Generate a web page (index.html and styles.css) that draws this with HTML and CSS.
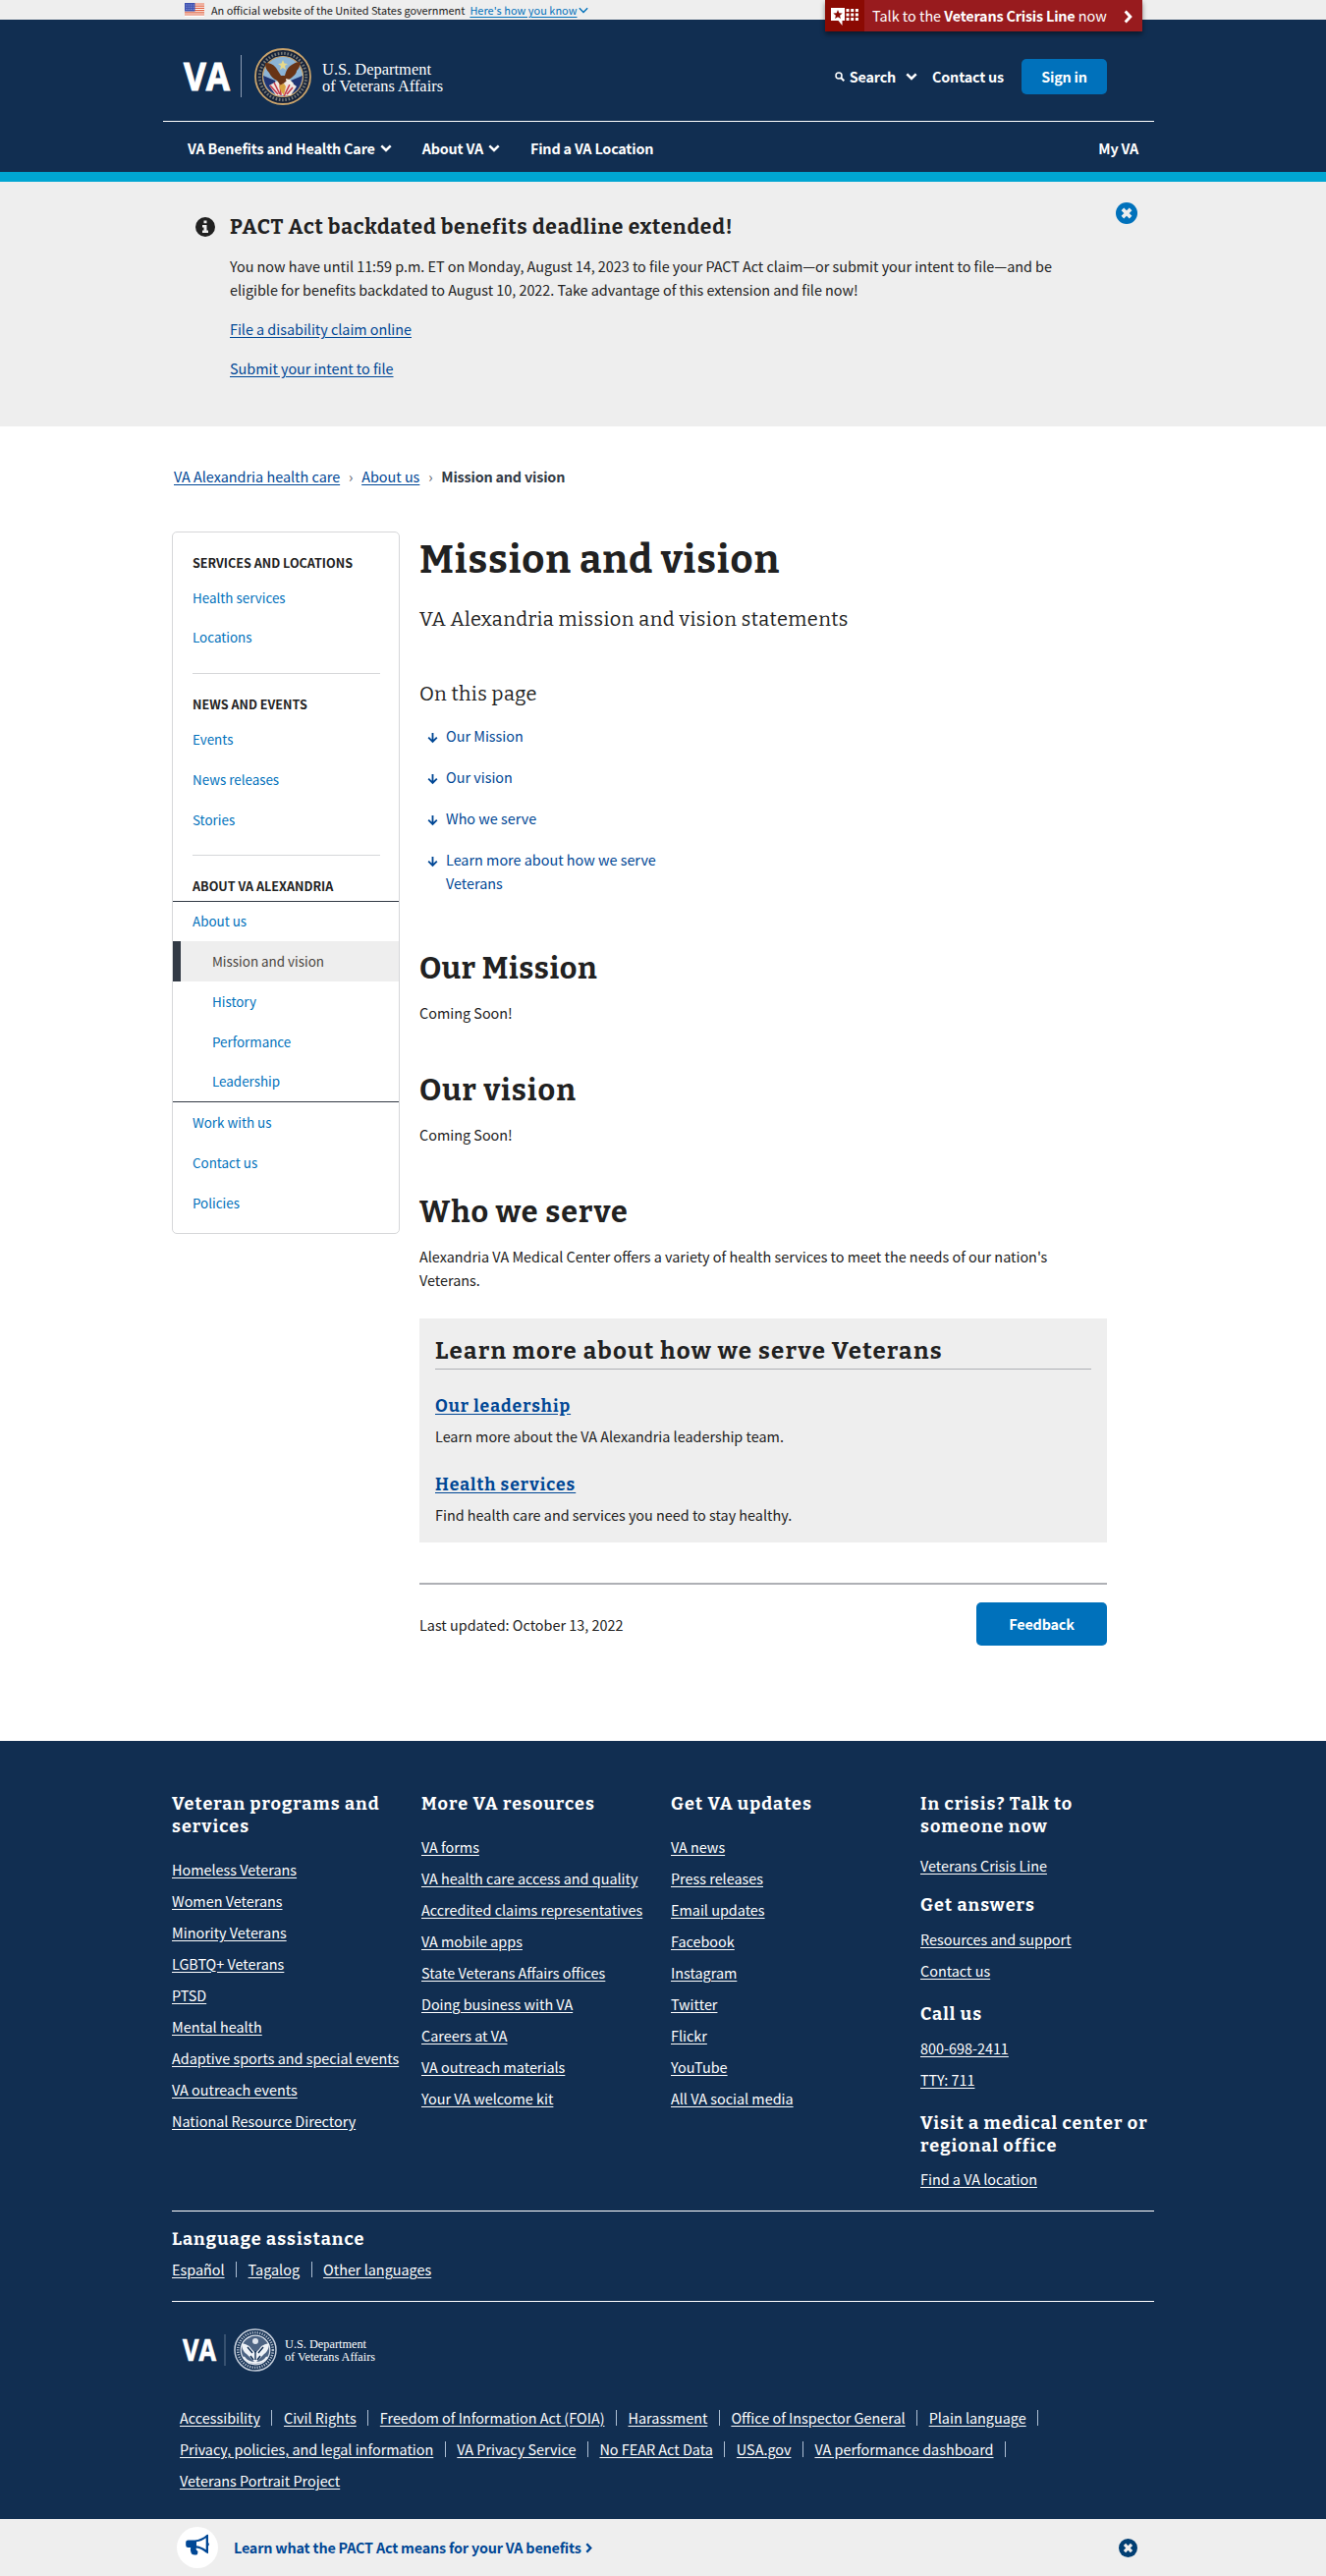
FILE: index.html
```html
<!DOCTYPE html>
<html lang="en">
<head>
<meta charset="utf-8">
<title>Mission and vision | VA Alexandria health care</title>
<link rel="stylesheet" href="styles.css">
</head>
<body>
<svg class="defs" aria-hidden="true">
  <symbol id="chevron-down" viewBox="0 0 12 8"><path d="M1.3 1.3 6 6l4.700-4.700" fill="none" stroke="currentColor" stroke-width="2.500"/></symbol>
  <symbol id="chevron-thin" viewBox="0 0 12 8"><path d="M1 1.300 6 6.300l5-5" fill="none" stroke="currentColor" stroke-width="1.700"/></symbol>
  <symbol id="chevron-right" viewBox="0 0 10 16"><path d="M1.800 1.800 7.600 8l-5.800 6.200" fill="none" stroke="currentColor" stroke-width="3.400"/></symbol>
  <symbol id="close" viewBox="0 0 22 22"><circle cx="11" cy="11" r="11" fill="currentColor"/><path d="m6.900 6.900 8.200 8.200m0-8.200-8.200 8.200" stroke="#eee" stroke-width="3.700"/></symbol>
  <symbol id="arrow-down" viewBox="0 0 12 12"><path d="M6 .5v10M1.300 5.600 6 10.300l4.700-4.700" fill="none" stroke="currentColor" stroke-width="2"/></symbol>
</svg>

<div class="gov-banner">
  <div class="gov-inner">
    <svg class="flag" viewBox="0 0 20 14"><path fill="#fff" d="M0 0h20v14H0z"/><path d="M0 1h20M0 3.200h20M0 5.400h20M0 7.600h20M0 9.800h20M0 12h20" stroke="#e0603f" stroke-width="1.200"/><path fill="#3c50b0" d="M0 0h10.500v8.500H0z"/><path d="M1.500 2h8M1.500 4.200h8M1.500 6.400h8" stroke="#aab4e6" stroke-dasharray="1 1.300"/></svg>
    <span class="gov-text">An official website of the United States government</span>
    <a class="gov-link">Here's how you know</a><svg class="gov-chev"><use href="#chevron-thin"/></svg>
  </div>
  <a class="crisis">
    <span class="crisis-icon"><svg viewBox="0 0 28 18"><path fill="#fff" d="M0 0h14v13h-2.500v5l-4-5H0z"/><path fill="#8b0a03" d="m7 2 1.300 3.200 3.400.3-2.600 2.200.8 3.300L7 9.200 4.100 11l.8-3.300-2.600-2.200 3.400-.3z"/><path d="M15.500 2.500H28M15.500 7H28M15.500 11.500H28" stroke="#fff" stroke-width="3" stroke-dasharray="3 1.700"/></svg></span>
    <span class="crisis-text">Talk to the <b>Veterans Crisis Line</b> now</span>
    <svg class="crisis-chev"><use href="#chevron-right"/></svg>
  </a>
</div>

<header class="header">
  <div class="header-top">
    <svg class="logo" viewBox="0 0 268 62">
      <text class="logo-va" x="0" y="45" font-size="40" textLength="47" lengthAdjust="spacingAndGlyphs">VA</text>
      <path d="M58.500 9v43" stroke="#8b9cb3"/>
      <g transform="translate(101 31)">
        <circle r="28" fill="#15223a" stroke="#c9a36b" stroke-width="1.800"/>
        <circle r="23.700" fill="none" stroke="#b8b4a0" stroke-width="3" stroke-dasharray="1.600 1.700" opacity=".6"/>
        <circle r="20.500" fill="#8cb4d6" stroke="#c9a36b" stroke-width="1.200"/>
        <path fill="#1f3472" d="M-20-1-8 4l4 15c-9-2-15-9-16-20zM20-1 8 4l-3 15c9-2 14-9 15-20z"/>
        <path fill="#f0e6e0" d="M-14 9-5 4h11l8 6-6 9H-7z"/>
        <path d="m-13 9 8 9m-4-12 6 12m0-13 1 14m9-11-6 12m9-9-6 7" stroke="#c23a4c" stroke-width="1.600"/>
        <path fill="#683416" d="M-18-14c4 0 8 1 11 5l5 8 4 0c1-4 3-9 7-11 3-2 5-3 9-3-1 4-1 6-4 9 0 3-3 5-5 7L3 5-2 9-6 4c-4-2-6-4-8-8-3-3-4-6-4-10z"/>
        <path fill="#f3efe6" d="m3 2 4 1 4 4-2 2-5-2z"/>
        <path fill="#d9a441" d="m-4 9 5-2 2 3-2 9-3-4z"/>
        <path fill="#e8d98a" d="m0-17 1.500 3.500L5-13l-3 2 1 4-3-2-3 2 1-4-3-2 3.500-.5z"/>
      </g>
      <text class="logo-dept" x="141" y="28.500" font-size="17.500" textLength="111" lengthAdjust="spacingAndGlyphs">U.S. Department</text>
      <text class="logo-dept" x="141" y="45.500" font-size="17.500" textLength="123" lengthAdjust="spacingAndGlyphs">of Veterans Affairs</text>
    </svg>
    <div class="tools">
      <a class="search"><svg class="glass" viewBox="0 0 10 10"><circle cx="4" cy="4" r="3" fill="none" stroke="currentColor" stroke-width="1.500"/><path d="m6 6 3.300 3.300" stroke="currentColor" stroke-width="2"/></svg>Search<svg class="chev"><use href="#chevron-down"/></svg></a>
      <a class="contact">Contact us</a>
      <a class="sign-in">Sign in</a>
    </div>
  </div>
  <nav class="nav">
    <a>VA Benefits and Health Care<svg class="chev"><use href="#chevron-down"/></svg></a>
    <a class="nav-about">About VA<svg class="chev"><use href="#chevron-down"/></svg></a>
    <a class="nav-find">Find a VA Location</a>
    <a class="nav-my">My VA</a>
  </nav>
</header>

<section class="notice">
  <div class="notice-inner">
    <svg class="info" viewBox="0 0 20 20"><circle cx="10" cy="10" r="10" fill="#212121"/><path fill="#eee" d="M8.500 3.500h3v2.800h-3zM7 8h4.500v5.500H13V16H7v-2.500h1.500v-3H7z"/></svg>
    <div class="notice-body">
      <h2>PACT Act backdated benefits deadline extended!</h2>
      <p>You now have until 11:59 p.m. ET on Monday, August 14, 2023 to file your PACT Act claim—or submit your intent to file—and be<br>eligible for benefits backdated to August 10, 2022. Take advantage of this extension and file now!</p>
      <p><a>File a disability claim online</a></p>
      <p><a>Submit your intent to file</a></p>
    </div>
    <svg class="close"><use href="#close"/></svg>
  </div>
</section>

<nav class="crumbs"><a>VA Alexandria health care</a><i>›</i><a>About us</a><i>›</i><b>Mission and vision</b></nav>

<div class="content">
  <aside class="side">
    <h3>Services and locations</h3>
    <a>Health services</a>
    <a>Locations</a>
    <hr>
    <h3>News and events</h3>
    <a>Events</a>
    <a>News releases</a>
    <a>Stories</a>
    <hr>
    <h3>About VA Alexandria</h3>
    <div class="side-open">
      <a>About us</a>
      <a class="sub active">Mission and vision</a>
      <a class="sub">History</a>
      <a class="sub">Performance</a>
      <a class="sub">Leadership</a>
    </div>
    <a>Work with us</a>
    <a>Contact us</a>
    <a>Policies</a>
  </aside>

  <main class="main">
    <h1>Mission and vision</h1>
    <p class="intro">VA Alexandria mission and vision statements</p>
    <h2 class="toc-title">On this page</h2>
    <ul class="toc">
      <li><svg><use href="#arrow-down"/></svg><a>Our Mission</a></li>
      <li><svg><use href="#arrow-down"/></svg><a>Our vision</a></li>
      <li><svg><use href="#arrow-down"/></svg><a>Who we serve</a></li>
      <li><svg><use href="#arrow-down"/></svg><a>Learn more about how we serve Veterans</a></li>
    </ul>
    <h2>Our Mission</h2>
    <p>Coming Soon!</p>
    <h2 class="wide">Our vision</h2>
    <p>Coming Soon!</p>
    <h2 class="wide">Who we serve</h2>
    <p>Alexandria VA Medical Center offers a variety of health services to meet the needs of our nation's<br>Veterans.</p>
    <section class="more">
      <h3>Learn more about how we serve Veterans</h3>
      <h4><a>Our leadership</a></h4>
      <p>Learn more about the VA Alexandria leadership team.</p>
      <h4><a>Health services</a></h4>
      <p>Find health care and services you need to stay healthy.</p>
    </section>
    <div class="updated">
      <span>Last updated: October 13, 2022</span>
      <a class="feedback">Feedback</a>
    </div>
  </main>
</div>

<footer class="footer">
  <div class="footer-inner">
    <div class="cols">
      <div>
        <h4>Veteran programs and services</h4>
        <ul><li><a>Homeless Veterans</a></li><li><a>Women Veterans</a></li><li><a>Minority Veterans</a></li><li><a>LGBTQ+ Veterans</a></li><li><a>PTSD</a></li><li><a>Mental health</a></li><li><a>Adaptive sports and special events</a></li><li><a>VA outreach events</a></li><li><a>National Resource Directory</a></li></ul>
      </div>
      <div>
        <h4>More VA resources</h4>
        <ul><li><a>VA forms</a></li><li><a>VA health care access and quality</a></li><li><a>Accredited claims representatives</a></li><li><a>VA mobile apps</a></li><li><a>State Veterans Affairs offices</a></li><li><a>Doing business with VA</a></li><li><a>Careers at VA</a></li><li><a>VA outreach materials</a></li><li><a>Your VA welcome kit</a></li></ul>
      </div>
      <div>
        <h4>Get VA updates</h4>
        <ul><li><a>VA news</a></li><li><a>Press releases</a></li><li><a>Email updates</a></li><li><a>Facebook</a></li><li><a>Instagram</a></li><li><a>Twitter</a></li><li><a>Flickr</a></li><li><a>YouTube</a></li><li><a>All VA social media</a></li></ul>
      </div>
      <div class="help">
        <h4>In crisis? Talk to someone now</h4>
        <ul class="first"><li><a>Veterans Crisis Line</a></li></ul>
        <h4>Get answers</h4>
        <ul><li><a>Resources and support</a></li><li><a>Contact us</a></li></ul>
        <h4>Call us</h4>
        <ul><li><a>800-698-2411</a></li><li><a>TTY: 711</a></li></ul>
        <h4>Visit a medical center or regional office</h4>
        <ul class="last"><li><a>Find a VA location</a></li></ul>
      </div>
    </div>
    <div class="lang">
      <h4>Language assistance</h4>
      <ul class="bars"><li><a>Español</a></li><li><a>Tagalog</a></li><li><a>Other languages</a></li></ul>
    </div>
    <svg class="footer-logo" viewBox="0 0 200 46">
      <text class="logo-va small" x="0" y="34" font-size="30.500" textLength="34" lengthAdjust="spacingAndGlyphs">VA</text>
      <path d="M43 7v32" stroke="#5f7490"/>
      <g transform="translate(74 23)">
        <circle r="21" fill="#112e51" stroke="#c5cedb" stroke-width="1.500"/>
        <circle r="17.800" fill="none" stroke="#c5cedb" stroke-width="2.600" stroke-dasharray="1.300 1.200" opacity=".85"/>
        <circle r="14.800" fill="#4d6483" stroke="#dfe5ee" stroke-width="1.300"/>
        <path fill="#eef2f7" d="M-14-7c4 1 8 2 10 6l4 4 4-4c2-4 6-5 10-6 0 5-2 9-5 11L5 8l-5 5-5-5-4-4c-3-2-5-6-5-11z"/>
        <circle cy="-9" r="3" fill="#dfe5ee"/>
        <path d="m-8-3 5 6m11-6-5 6M0 1v9m-5-4 3 4m7-4-3 4" stroke="#112e51" stroke-width="1.400"/>
        <path d="M-12 7c5 8 19 8 24 0" fill="none" stroke="#eef2f7" stroke-width="2"/>
      </g>
      <text class="logo-dept" x="104" y="21" font-size="12.500" textLength="83" lengthAdjust="spacingAndGlyphs">U.S. Department</text>
      <text class="logo-dept" x="104" y="33.500" font-size="12.500" textLength="92" lengthAdjust="spacingAndGlyphs">of Veterans Affairs</text>
    </svg>
    <ul class="bars legal"><li><a>Accessibility</a></li><li><a>Civil Rights</a></li><li><a>Freedom of Information Act (FOIA)</a></li><li><a>Harassment</a></li><li><a>Office of Inspector General</a></li><li><a>Plain language</a></li><li><a>Privacy, policies, and legal information</a></li><li><a>VA Privacy Service</a></li><li><a>No FEAR Act Data</a></li><li><a>USA.gov</a></li><li><a>VA performance dashboard</a></li><li><a>Veterans Portrait Project</a></li></ul>
  </div>
</footer>

<div class="promo">
  <div class="promo-inner">
    <span class="promo-icon"><svg viewBox="0 0 24 22"><path fill="currentColor" fill-rule="evenodd" d="M23 .8v8.100a2.300 2.300 0 0 1 0 3.600v7.700l-2.300-1c-3-2.600-6.200-4.200-9.800-4.700-.8 1 .2 2.400 1.600 3.600l-.5 2.800c-1.800 1-4.500.8-5.900-.4-.8-2.300-1.700-4-.9-6.500H2.500A2.300 2.300 0 0 1 .2 11.700V8.600a2.300 2.300 0 0 1 2.300-2.200h6.800C13.800 6.200 18 4.200 21.500 1zM20.700 4.300c-3 2.200-6.200 3.600-9.700 4v3.900c3.500.5 6.700 1.800 9.700 4.100z"/></svg></span>
    <a class="promo-link">Learn what the PACT Act means for your VA benefits<svg><use href="#chevron-right"/></svg></a>
    <svg class="promo-close"><use href="#close"/></svg>
  </div>
</div>
</body>
</html>
```
FILE: styles.css
```css
* { box-sizing: border-box; }
body {
  margin: 0;
  background: #fff;
  color: #212121;
  font: 14.4px/24px "Noto Sans CJK SC", "Open Sans", sans-serif;
}
h1, h2, h3, h4, p, ul { margin: 0; padding: 0; }
h1, h2, h3, h4, .intro { font-family: Bitter, "DejaVu Serif Condensed", serif; }
ul { list-style: none; }
a { color: #004795; text-decoration: none; }
b, .tools, .nav, .feedback, .promo-link { font-weight: 700; letter-spacing: -.2px; }
svg { display: block; }
.defs { position: absolute; width: 0; height: 0; }

/* government banner */
.gov-banner { position: relative; height: 20px; background: #eee; }
.gov-inner {
  display: flex; align-items: center;
  height: 20px; padding-left: 188px;
  font-size: 10.9px; line-height: 20px;
}
.flag { width: 20px; height: 14px; margin-right: 7px; }
.gov-link {
  margin-left: 5px; color: #0071bb; letter-spacing: .06px;
  text-decoration: underline; text-underline-offset: 2px;
}
.gov-chev { width: 10px; height: 7px; margin-left: 1px; color: #0071bb; }
.crisis {
  position: absolute; left: 840px; top: 0; z-index: 2;
  display: flex; align-items: center;
  width: 323px; height: 32px;
  background: #981b1e; color: #fff;
  box-shadow: 0 3px 5px rgba(0, 0, 0, .45);
}
.crisis-icon {
  display: flex; align-items: center;
  width: 40px; height: 32px; padding-left: 6px;
  background: #8b0a03;
}
.crisis-icon svg { width: 28px; height: 18px; margin-top: 2px; }
.crisis-text { margin-left: 8px; white-space: nowrap; }
.crisis-chev { width: 9px; height: 14px; margin: 1px 10px 0 auto; }

/* header */
.header { height: 165px; background: #112e51; border-bottom: 10px solid #00a6d2; }
.header a { color: #fff; }
.header-top {
  display: flex; align-items: center; justify-content: space-between;
  width: 1009px; height: 104px; margin-left: 166px;
  padding: 12px 48px 0 20.500px;
  border-bottom: 1px solid #fff;
}
.logo { width: 268px; height: 62px; overflow: visible; }
.logo-va { font-family: "Open Sans", sans-serif; font-weight: 700; fill: #fff; stroke: #fff; stroke-width: 1px; letter-spacing: 0; }
.logo-va.small { stroke-width: .7px; }
.logo-dept { font-family: "Liberation Serif", serif; font-weight: 400; fill: #fff; letter-spacing: 0; }
.tools, .search { display: flex; align-items: center; }
.glass { width: 10px; height: 10px; margin-right: 5px; }
.chev { width: 12px; height: 8px; }
.search .chev { margin-left: 10px; }
.contact { margin-left: 15px; }
.sign-in {
  width: 87px; height: 36px; margin-left: 18px;
  border-radius: 5px; background: #0071bb;
  line-height: 36px; text-align: center;
}
.nav {
  display: flex; align-items: center;
  height: 51px; padding: 3px 191px 0;
}
.nav a { display: flex; align-items: center; white-space: nowrap; }
.nav .chev { margin-left: 5px; }
.nav-about { margin-left: 31px; }
.nav-find { margin-left: 31px; }
.nav-my { margin-left: auto; }

/* notice */
.notice { height: 249px; background: #eee; }
.notice-inner { display: flex; padding: 33px 192px 0 199px; }
.info { width: 20px; height: 20px; margin: 3px 15px 0 0; }
.notice-body { flex: 1; white-space: nowrap; }
.notice-body h2 { margin-bottom: 15px; font-size: 21px; line-height: 26px; letter-spacing: .79px; }
.notice-body p { margin-bottom: 16px; letter-spacing: -.02px; }
.notice-body a, .crumbs a, .more a, .footer a { text-decoration: underline; text-underline-offset: 2px; }
.close { width: 22px; height: 22px; margin-top: -12px; color: #0071bb; }

/* breadcrumb */
.crumbs { display: flex; height: 107px; padding: 39px 0 0 177px; }
.crumbs i { width: 22px; color: #5b616b; font-style: normal; text-align: center; }
.crumbs b { color: #323a45; }

/* columns */
.content { display: flex; height: 1231px; padding-left: 175px; }

/* side navigation */
.side {
  width: 232px; height: 715px; margin-right: 20px;
  padding-top: 18.500px;
  border: 1px solid #d6d7d9; border-radius: 5px;
}
.side h3 {
  padding: 0 0 0 20px; margin-bottom: 3px;
  font: 700 12.600px/24px "Noto Sans CJK SC", sans-serif;
  text-transform: uppercase;
}
.side a { display: block; padding-left: 20px; color: #0071bb; font-size: 13.400px; line-height: 40.750px; }
.side hr { height: 0; margin: 15.500px 19px 19.500px 20px; border: 0; border-top: 1px solid #d6d7d9; }
.side-open { border: solid #323a45; border-width: 1px 0; }
.side-open a:first-child { margin-top: -1px; }
.side .sub { padding-left: 40px; }
.side .active { padding-left: 32px; border-left: 8px solid #323a45; background: #eee; color: #494440; }

/* article */
.main { width: 700px; }
h1 { font-size: 40px; line-height: 52px; letter-spacing: .89px; padding-top: 3px; }
.intro { margin-top: 18px; font-size: 20px; line-height: 32px; letter-spacing: .44px; }
.toc { width: 250px; padding-left: 8px; margin-bottom: 55px; }
.toc li { display: flex; margin-bottom: 18px; }
.toc li:last-child { margin-bottom: 0; }
.toc svg { flex: none; width: 11px; height: 12px; margin: 8px 8px 0 0; color: #004795; }
.main h2 { margin: 47px 0 14px; font-size: 30.500px; line-height: 39px; letter-spacing: .6px; }
.main .wide { letter-spacing: 1.050px; }
.toc + h2 { margin-top: 0; }
.main .toc-title { margin: 47px 0 18px; font-size: 20px; font-weight: 400; line-height: 26px; letter-spacing: .42px; }
.main p { white-space: nowrap; }
.more { height: 228px; margin-top: 27px; padding: 18px 16px 0; background: #eee; }
.more h3 {
  margin-bottom: 25px; padding-bottom: 3px;
  border-bottom: 1px solid #aeb0b5;
  font-size: 24px; line-height: 30px; letter-spacing: 1.350px;
}
.more h4 { margin-bottom: 6px; font-size: 17.500px; line-height: 25px; letter-spacing: 1px; }
.more p { margin-bottom: 25px; }
.updated {
  display: flex; justify-content: space-between;
  margin-top: 41px; padding-top: 18px;
  border-top: 2px solid #aeb0b5;
}
.updated span { line-height: 46px; }
.feedback {
  width: 133px; height: 44px; border-radius: 5px;
  background: #0071bb; color: #fff;
  line-height: 44px; text-align: center;
}

/* footer */
.footer { height: 792px; padding: 53px 0 0 175px; background: #112e51; color: #fff; }
.footer-inner { width: 1000px; }
.footer a { color: #fff; }
.footer h4 { font-size: 18px; line-height: 23px; letter-spacing: 1.050px; }
.footer li { line-height: 32px; white-space: nowrap; }
.cols { display: grid; grid-template-columns: repeat(4, 254px); height: 425px; }
.cols h4 { margin-bottom: 16px; padding-right: 15px; }
.help h4 { margin: 17px 0 7px; }
.cols .help h4:first-child { margin: 0 0 12px; padding-right: 50px; }
.help .first + h4 { margin-top: 13px; }
.help h4 { padding-right: 0; }
.help .last { margin-top: -1px; }
.lang { height: 93px; padding-top: 17px; border: solid #fff; border-width: 1px 0; }
.lang h4 { margin-bottom: 3px; }
.bars { display: flex; flex-wrap: wrap; }
.bars li { display: flex; align-items: center; }
.bars li:not(:last-child)::after { content: ""; height: 16px; margin: -1px 11.500px 0; border-left: 1px solid #aebfd4; }
.footer-logo { width: 200px; height: 46px; margin: 26px 0 0 11px; overflow: visible; }
.legal { margin: 30px 0 0 8px; width: 960px; }

/* promo bar */
.promo { height: 58px; background: #eee; }
.promo-inner { display: flex; align-items: center; height: 58px; padding: 0 192px 0 180px; }
.promo-icon {
  display: flex; align-items: center; justify-content: center;
  width: 42px; height: 42px; padding-bottom: 6px;
  border-radius: 50%; background: #fff; color: #004795;
}
.promo-icon svg { width: 24px; height: 22px; }
.promo-link { display: flex; align-items: center; margin-left: 16px; }
.promo-link svg { width: 7px; height: 11px; margin-left: 4px; }
.promo-close { width: 19px; height: 19px; margin-left: auto; color: #003e73; }
```
